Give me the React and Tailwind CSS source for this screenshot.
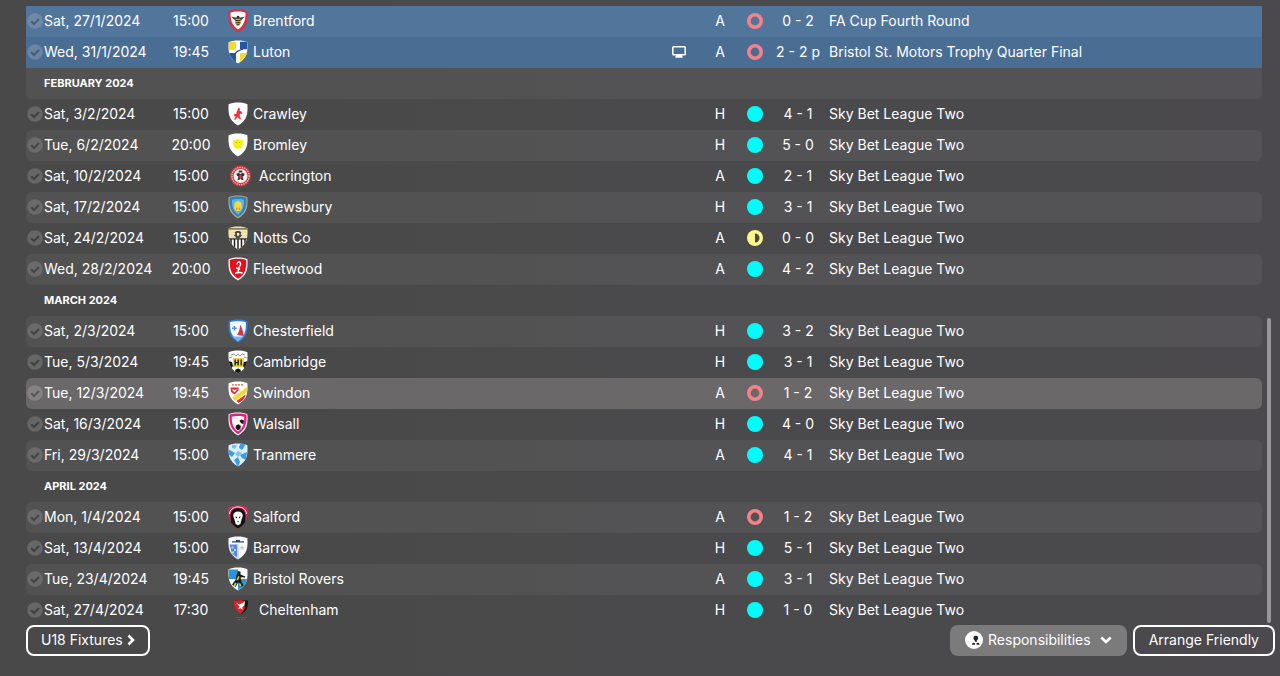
import React, { useId } from "react";

const SHIELD =
  "M10 .6C13.8.6 17 1.1 19.4 2.2 20 11.6 19.2 18.4 10 23.4.8 18.4 0 11.6.6 2.2 3 1.1 6.2.6 10 .6Z";

const LEAGUE = "Sky Bet League Two";

const MONTHS = [
  {
    name: null,
    rows: [
      ["Sat, 27/1/2024", "15:00", "Brentford", "A", "loss", "0 - 2", "FA Cup Fourth Round", "cup"],
      ["Wed, 31/1/2024", "19:45", "Luton", "A", "loss", "2 - 2 p", "Bristol St. Motors Trophy Quarter Final", "cupAlt", true],
    ],
  },
  {
    name: "FEBRUARY 2024",
    striped: true,
    rows: [
      ["Sat, 3/2/2024", "15:00", "Crawley", "H", "win", "4 - 1", LEAGUE, "plain"],
      ["Tue, 6/2/2024", "20:00", "Bromley", "H", "win", "5 - 0", LEAGUE, "stripe"],
      ["Sat, 10/2/2024", "15:00", "Accrington", "A", "win", "2 - 1", LEAGUE, "plain"],
      ["Sat, 17/2/2024", "15:00", "Shrewsbury", "H", "win", "3 - 1", LEAGUE, "stripe"],
      ["Sat, 24/2/2024", "15:00", "Notts Co", "A", "draw", "0 - 0", LEAGUE, "plain"],
      ["Wed, 28/2/2024", "20:00", "Fleetwood", "A", "win", "4 - 2", LEAGUE, "stripe"],
    ],
  },
  {
    name: "MARCH 2024",
    rows: [
      ["Sat, 2/3/2024", "15:00", "Chesterfield", "H", "win", "3 - 2", LEAGUE, "stripe"],
      ["Tue, 5/3/2024", "19:45", "Cambridge", "H", "win", "3 - 1", LEAGUE, "plain"],
      ["Tue, 12/3/2024", "19:45", "Swindon", "A", "loss", "1 - 2", LEAGUE, "active"],
      ["Sat, 16/3/2024", "15:00", "Walsall", "H", "win", "4 - 0", LEAGUE, "plain"],
      ["Fri, 29/3/2024", "15:00", "Tranmere", "A", "win", "4 - 1", LEAGUE, "stripe"],
    ],
  },
  {
    name: "APRIL 2024",
    rows: [
      ["Mon, 1/4/2024", "15:00", "Salford", "A", "loss", "1 - 2", LEAGUE, "stripe"],
      ["Sat, 13/4/2024", "15:00", "Barrow", "H", "win", "5 - 1", LEAGUE, "plain"],
      ["Tue, 23/4/2024", "19:45", "Bristol Rovers", "A", "win", "3 - 1", LEAGUE, "stripe"],
      ["Sat, 27/4/2024", "17:30", "Cheltenham", "H", "win", "1 - 0", LEAGUE, "plain"],
    ],
  },
];

const ROW_TONES = {
  cup: "bg-[#52759c]",
  cupAlt: "bg-[#4a6d94]",
  plain: "",
  stripe: "bg-white/5",
  active: "bg-[#6b686a]",
};

const MARK_TONES = {
  cup: ["#7089a6", "#46617f"],
  cupAlt: ["#6a84a2", "#425d7b"],
  plain: ["#676666", "#424141"],
  stripe: ["#6a6a69", "#464545"],
  active: ["#858284", "#5a5758"],
};

const CREST_ART = {
  Brentford: (
    <>
      <path fill="#d8303f" d="M0 0h20v24H0z" />
      <path fill="#fff" d="M10 2.500c3.200 0 5.800.4 7.500 1.200.2 7.300-1.500 12.500-7.500 16.900C4 16.200 2.300 11 2.500 3.700 4.200 2.900 6.800 2.500 10 2.500z" />
      <path fill="#4a463f" d="M3 7.500l5.500 1.200h3L17 7.500l-3.800 3.800H6.800z" />
      <ellipse cx="10" cy="12.800" rx="2.800" ry="3.600" fill="#d9a928" />
      <path stroke="#2c2920" strokeWidth="1" d="M7.500 11.600h5M7.600 13.800h4.800M8.500 15.800h3" />
      <circle cx="10" cy="8.200" r="1.500" fill="#2c2920" />
    </>
  ),
  Luton: (
    <>
      <path fill="#fff" d="M0 0h20v24H0z" />
      <path fill="#f5dc28" d="M1 1.800h7v8H1zM12 13h7v11h-7z" />
      <path fill="#2357a5" d="M12 1.800h7.500v7.500H12zM1 13h7v10H1z" />
      <path stroke="#3b4657" strokeWidth="1.300" fill="none" d="M7 13.500l3-2.500 5-2" />
    </>
  ),
  Crawley: (
    <>
      <path fill="#fff" d="M0 0h20v24H0z" />
      <path fill="#ee3340" d="M10.500 5.500l1.700 1.600-.7 1.600 2.200 1 .6 2.600-2.300-.8-.3 2.600 1.600 3.400-2.300-.8-1.600-1.700-1.500 2.500-1.800.3.700-1.700 1-1.500-2-.7.5-2.200 2 .4.300-2.200z" />
    </>
  ),
  Bromley: (
    <>
      <path fill="#fff" d="M0 0h20v24H0z" />
      <circle cx="10" cy="11" r="4.800" fill="#f8ee12" />
      <path fill="#f8ee12" d="M5 7l3 1 2-2 2 2 3-1v4H5z" />
      <path fill="#b9a912" d="M8 9h1v1H8zM11 9h1v1h-1z" />
    </>
  ),
  Shrewsbury: (
    <>
      <path fill="#b9a878" d="M0 0h20v24H0z" />
      <path fill="#2a83c9" d="M10 1.600c3.500 0 6.500.4 8.400 1.200.4 8.600-1 14.900-8.400 19.300C2.600 17.700 1.200 11.400 1.600 2.800 3.500 2 6.500 1.600 10 1.600z" />
      <path fill="#5fb2e2" d="M10 4c2.700 0 4.600.3 6 .8.2 6.800-1 11.400-6 15C5 16.200 3.800 11.600 4 4.800 5.400 4.300 7.300 4 10 4z" />
      <path fill="#f6d735" d="M10 5.500l3.500 2.500.5 5-2 3H8l-2-3 .5-5z" />
      <path fill="#e49527" d="M8 12.500h1.400v2.500H8zM10.800 12.500h1.400v2.500h-1.400z" />
    </>
  ),
  "Notts Co": (
    <>
      <path fill="#efe3af" d="M0 0h20v13H0z" />
      <path fill="#fff" d="M0 12h20v12H0z" />
      <path stroke="#5b5646" strokeWidth="1.200" d="M0 2.800h20" />
      <path stroke="#26231e" strokeWidth="1.200" d="M0 12.800h20" />
      <path stroke="#26231e" strokeWidth="1.500" d="M3 13v10M6.500 13v10M10 13v10M13.500 13v10M17 13v10" />
      <path fill="#4f4a40" d="M6.500 6.500l2-1.500h3l2 1.500-1 1.500 1.500 1.500-2.500 2.500h-3L6 9.500 7.500 8z" />
      <path fill="#f7f2dc" d="M9 7h2.200v2.800H9z" />
    </>
  ),
  Fleetwood: (
    <>
      <path fill="#fff" d="M0 0h20v24H0z" />
      <path fill="#e4101e" d="M10 1.800c3.500 0 6.500.4 8.200 1.200.4 8.400-1 14.500-8.200 18.800C2.800 17.500 1.400 11.400 1.800 3 3.500 2.200 6.500 1.800 10 1.800z" />
      <path fill="none" stroke="#fff" strokeWidth="1.400" strokeLinecap="round" d="M9 7c.5-3 4-2.500 3.500.5L10.500 12l-.5 4M7.500 16.500c1-1 4-1.500 6.500-.5M8.500 11l3 1" />
    </>
  ),
  Chesterfield: (
    <>
      <path fill="#2f7fd6" d="M0 0h20v24H0z" />
      <path fill="#f7faff" d="M10 2.200c3.500 0 6 .3 7.800 1.100.3 7.700-.8 11.700-3.800 14.700H6C3 15 1.900 11 2.200 3.300 4 2.500 6.500 2.200 10 2.200z" />
      <path fill="#5b8fe0" d="M5.600 7v1.500H4v1.500h1.600v1.500h1.600V10h1.600V8.500H7.200V7z" />
      <path fill="#d8334b" d="M12 5.500c2 3.500 3.500 7.500 3.500 11.500l-6.500-1c2-3 3-6 3-10.500z" />
      <path fill="#79b6ee" d="M4 17.500h12l-6 5z" />
    </>
  ),
  Cambridge: (
    <>
      <path fill="#fff" d="M0 0h20v24H0z" />
      <path fill="#f1d23c" d="M5 8h11v9H5z" />
      <path fill="#171717" d="M0 11l4 1 1 4-2 3-3-3zM20 11l-4 1-1 4 2 3 3-3zM7.500 19.500l2.500-1 2.500 1 .5 2.500-3 2-3-2zM6.500 9.500h1.300V12h1.700V9.500h1.300v6H9.500v-2.200H7.800v2.200H6.500zM12.500 9.500h1.300v6h-1.300z" />
      <path stroke="#99958c" strokeWidth="1" fill="none" d="M3 5l3-1 2 2 2-2 2 2 2-2 3 1M1 8l3-1m15 1-3-1" />
    </>
  ),
  Swindon: (
    <>
      <path fill="#fff" d="M0 0h20v24H0z" />
      <path fill="#e22d38" d="M2.500 6.500h8v3l-4 4-3.500-2.500zM17.500 13.500c-.3 4-3.500 7-7 8.500l-2-2z" />
      <path fill="#f5d932" d="M19 6v5L7.500 20 4 17z" />
      <path fill="none" stroke="#d95a52" strokeWidth="1.200" strokeDasharray="2 1" d="M4 3.800h12" />
      <path fill="#fff" d="M4.500 8l2 1.300 2-1.300v1.500l-2 1.800-2-1.800z" />
    </>
  ),
  Walsall: (
    <>
      <path fill="#fff" d="M0 0h20v24H0z" />
      <path fill="#e32082" d="M10 1.400c3.500 0 6.800.4 8.600 1.200.4 8.600-1 15.100-8.600 19.600C2.400 17.700 1 11.200 1.400 2.600 3.200 1.800 6.500 1.400 10 1.400z" />
      <path fill="#fff5f2" d="M10 4c2.700 0 4.800.3 6.200.8.2 6.800-1.200 11.400-6.200 14.800C5 16.200 3.600 11.600 3.800 4.800 5.200 4.300 7.300 4 10 4z" />
      <path fill="#17161a" d="M11.500 8.500l2-1 2.500 1-.5 3.500-2.500-.8zM8 13.500l2.500-1.200 2.500 1.700-.8 3-2.200 1.500L7.500 16z" />
    </>
  ),
  Tranmere: (
    <>
      <path fill="#d8effd" d="M0 0h20v24H0z" />
      <path fill="#3e9ce2" d="M0 6l7 4-3 4-4-3zM12 1h6l-4 6-3-2zM12 12l7-3-1 8-4-2zM6 17l4-3 2 5-2 5z" />
      <path fill="#7fc2ee" d="M4 2h5l-2 4-3-1zM10 8l4 2-4 4-3-3z" />
    </>
  ),
  Salford: (
    <>
      <path fill="#dc2b58" d="M0 0h20v24H0z" />
      <path fill="#131214" d="M10 3c5 0 8 4 7.500 9L17 21l-7 3-7-3-.5-9C2 7 5 3 10 3z" />
      <path fill="#f8f8f8" d="M10 6.500c3 0 4.800 1.700 4.800 4.500l-1.400 4-1 4-2.400 1.200L7.600 19l-1-4-1.400-4c0-2.800 1.800-4.500 4.800-4.500z" />
      <path fill="#131214" d="M7 11.500l2.300.6-.6 1.300zM13 11.500l-2.300.6.6 1.300zM9.200 16h1.600l-.8 1.500z" />
      <path fill="none" stroke="#fff" strokeWidth=".9" d="M1.500 9c0-4 3.500-7 8.500-7s8.500 3 8.500 7" />
    </>
  ),
  Barrow: (
    <>
      <path fill="#f7f9fd" d="M0 0h20v24H0z" />
      <path fill="#5789d8" d="M1.500 8.500h7.500v13L4 18z" />
      <path fill="#c4d8f6" d="M3.500 10.500h2v2h-2zM6 13h2v2H6zM4 15.500h2v2H4z" />
      <path stroke="#334a70" strokeWidth="1.200" fill="none" d="M4 5.800h12M8 4.600h4" />
      <path stroke="#e6b0b0" strokeWidth="1" d="M14 9.500v4.500m-2.200-2.200h4.500" />
      <path fill="none" stroke="#aac3e8" strokeWidth="1" d="M10 8v15" />
    </>
  ),
  "Bristol Rovers": (
    <>
      <path fill="#fff" d="M0 0h20v24H0z" />
      <path fill="#2695dc" d="M1 2.500h9V12H1zM10 12h9c-.8 5-4 9-9 11z" />
      <path fill="#171a1f" d="M10 4l2.500.8v2.700l4.700 2-.8 1.600-3.800-.6.7 3.700 2.200 4.600-2.500 1-2.700-4.500-2.700 4.700-3.600-2.500 3.700-5 .8-4.500z" />
      <path fill="#f2cc31" d="M10 9l1.500.8-1.500 3.500H8.500zM13.500 9.800l3 .8v1l-3-.4zM7 15.500l1.700 1-1.700 3-1.300-1zM12 15.800l1.500 3-1 .7-1.500-2.500z" />
    </>
  ),
};

function Crest({ team }) {
  const clip = useId();
  if (team === "Accrington") {
    return (
      <svg viewBox="0 0 26 24" className="h-6 w-[26px] shrink-0" aria-hidden="true">
        <circle cx="12.500" cy="12" r="10.500" fill="#c93a42" />
        <circle cx="12.500" cy="12" r="8.600" fill="none" stroke="#f0b3b3" strokeWidth="1.400" strokeDasharray="1.400 .9" />
        <circle cx="12.500" cy="12" r="7" fill="#f5ecec" />
        <path fill="#353337" d="M11 6.500h3l.5 2h-4zM8.500 9.500l2.500-.5 1.500 1.200L14 9l2.500.5-.5 2.500-1.500.5 1 3.500h-1.500l-1.500-1.500L11 16H9.500l1-3.500-1.500-.5z" />
        <path fill="#d0474e" d="M11.500 11h2v3l-1 1-1-1z" />
      </svg>
    );
  }
  if (team === "Cheltenham") {
    return (
      <svg viewBox="0 0 26 24" className="h-6 w-[26px] shrink-0" aria-hidden="true">
        <path fill="#17151a" d="M7 2.500 13 2l7 .5c.5 7-1.500 11-7 14z" />
        <path fill="#df202c" d="M6 2.800l7-.8 4 1-1 3 1 4-4 6C8 13 5.500 9 6 2.800z" />
        <path fill="#fff" d="M8 4.500l3 2L15 5l2-2-.5 4-2.300 2.200.6 2.600-2.300-1.600-2.500.5 1.500-2.200z" />
        <path fill="none" stroke="#616163" strokeWidth="1" strokeDasharray="2 1" d="M8 19.500h11M10 21.500h7" />
      </svg>
    );
  }
  return (
    <svg viewBox="0 0 20 24" className="h-6 w-5 shrink-0" aria-hidden="true">
      <clipPath id={clip}>
        <path d={SHIELD} />
      </clipPath>
      <g clipPath={`url(#${clip})`}>{CREST_ART[team]}</g>
    </svg>
  );
}

function PlayedMark({ tone }) {
  const [disc, tick] = MARK_TONES[tone];
  return (
    <svg viewBox="0 0 16 16" className="ml-px size-4" aria-hidden="true">
      <circle cx="8" cy="8" r="7.800" fill={disc} />
      <path d="M4.200 8.200l2.800 2.800 5-5" fill="none" stroke={tick} strokeWidth="2" />
    </svg>
  );
}

function Result({ kind }) {
  return (
    <svg viewBox="0 0 16 16" className="mx-auto size-4" role="img" aria-label={kind}>
      {kind === "win" && <circle cx="8" cy="8" r="8" fill="#00fdfd" />}
      {kind === "loss" && <circle cx="8" cy="8" r="6.200" fill="none" stroke="#f68289" strokeWidth="3.600" />}
      {kind === "draw" && (
        <>
          <circle cx="8" cy="8" r="8" fill="#fdf68c" />
          <path d="M8 3.500a4.500 4.500 0 0 1 0 9z" fill="#4a494a" />
        </>
      )}
    </svg>
  );
}

function ScreenIcon() {
  return (
    <svg viewBox="0 0 14 12" className="mx-auto h-3 w-3.5" role="img" aria-label="Televised">
      <rect x=".8" y=".8" width="12.400" height="8" rx=".8" fill="none" stroke="#fff" strokeWidth="1.500" />
      <path fill="#fff" d="M4 9h6l.8 2.800H3.200z" />
    </svg>
  );
}

function FixtureRow({ row }) {
  const [date, time, team, venue, result, score, competition, tone, televised] = row;
  const isCup = tone === "cup" || tone === "cupAlt";
  const left = isCup ? "" : "rounded-l-md";
  const right = isCup ? "" : "rounded-r-md";
  const bg = `${ROW_TONES[tone]} pb-px`;
  return (
    <tr className="h-[31px]">
      <td className={`${bg} ${left}`}>
        <PlayedMark tone={tone} />
      </td>
      <td className={bg}>{date}</td>
      <td className={`${bg} text-center`}>{time}</td>
      <td className={bg}>
        <div className="flex items-center gap-[5px] pl-2.5">
          <Crest team={team} />
          {team}
        </div>
      </td>
      <td className={bg}>{televised && <ScreenIcon />}</td>
      <td className={`${bg} text-center`}>{venue}</td>
      <td className={bg}>
        <Result kind={result} />
      </td>
      <td className={`${bg} text-center`}>{score}</td>
      <td className={`${bg} ${right} pl-1`}>{competition}</td>
    </tr>
  );
}

export default function App() {
  return (
    <main className="flex min-h-screen flex-col bg-linear-to-r from-[#494949] to-[#4b494d] pt-1.5 font-['Inter',sans-serif] text-sm leading-5 font-normal text-white">
      <div className="flex gap-[5px] pr-[9px] pl-[26px]">
        <div className="min-w-0 flex-1">
          <table className="w-full table-fixed border-separate border-spacing-0 whitespace-nowrap" aria-label="Fixtures">
            <colgroup>
              <col className="w-[18px]" />
              <col className="w-[120px]" />
              <col className="w-[54px]" />
              <col />
              <col className="w-[47px]" />
              <col className="w-9" />
              <col className="w-[33px]" />
              <col className="w-[54px]" />
              <col />
            </colgroup>
            {MONTHS.map((month, i) => (
              <tbody key={i}>
                {month.name && (
                  <tr className="h-[31px]">
                    <th
                      colSpan={9}
                      scope="rowgroup"
                      className={`pb-px pl-[18px] text-left text-[11px] font-bold ${month.striped ? "rounded-b-md bg-white/5" : ""}`}
                    >
                      {month.name}
                    </th>
                  </tr>
                )}
                {month.rows.map((row) => (
                  <FixtureRow key={row[0]} row={row} />
                ))}
              </tbody>
            ))}
          </table>
        </div>
        <div className="flex w-1 flex-col justify-end pb-[3px]">
          <div className="h-[305px] rounded-full bg-[#989698]" />
        </div>
      </div>

      <footer className="-mt-px flex items-center gap-1.5 pr-[5px] pl-[26px]">
        <button type="button" className="mr-auto flex h-[31px] items-center gap-1 rounded-lg border-2 border-white px-[13px] pb-0.5">
          U18 Fixtures
          <svg viewBox="0 0 8 12" className="h-3 w-2" aria-hidden="true">
            <path d="M1.500 1.500 6 6l-4.500 4.500" fill="none" stroke="#fff" strokeWidth="2.600" />
          </svg>
        </button>
        <button type="button" className="flex h-[31px] items-center gap-[5px] rounded-lg bg-[#7c7b7c] px-[15px] pb-0.5">
          <svg viewBox="0 0 18 18" className="size-[18px]" aria-hidden="true">
            <circle cx="9" cy="9" r="9" fill="#fff" />
            <path fill="#222" d="M8.500 6.800c0-2.600 4.600-2.600 4.600 0 0 1.500-.6 2.200-1.300 2.700v1.300H9.800V9.500c-.7-.5-1.300-1.200-1.300-2.700zM7 13.800c0-1.500 1-2 2-2l1.800 1.300 1.800-1.300c1 0 2 .5 2 2z" />
            <path fill="#fff" d="M10 12.600h1.600v1.400H10z" />
          </svg>
          Responsibilities
          <svg viewBox="0 0 12 8" className="ml-1 h-2 w-3" aria-hidden="true">
            <path d="M1.300 1.500 6 6l4.700-4.500" fill="none" stroke="#fff" strokeWidth="2.600" />
          </svg>
        </button>
        <button type="button" className="h-[31px] rounded-lg border-2 border-white px-3.5 pb-0.5">
          Arrange Friendly
        </button>
      </footer>
    </main>
  );
}
